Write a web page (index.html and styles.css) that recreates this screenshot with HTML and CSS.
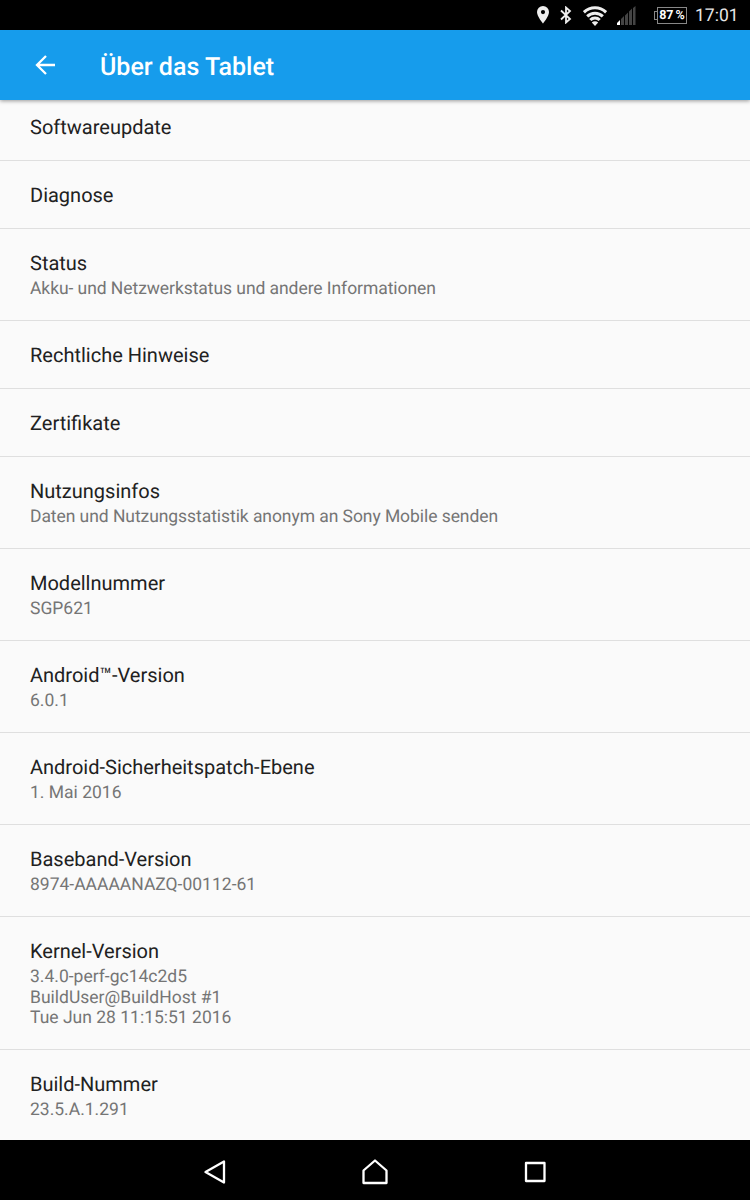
FILE: index.html
```html
<!DOCTYPE html>
<html lang="de">

<head>
    <meta charset="UTF-8">
    <meta name="viewport" content="width=device-width, initial-scale=1.0">
    <title>Über das Tablet</title>
    <link rel="stylesheet" href="styles.css">
</head>

<body>
    <div class="screen">
        <div class="statusbar">
            <svg class="icon-location" width="12" height="18" viewBox="0 0 12 18">
                <path fill="#eee" fill-rule="evenodd" d="M6 0a6 6 0 0 0-6 6c0 4.500 6 11.500 6 11.500S12 10.500 12 6a6 6 0 0 0-6-6zm0 4a2.100 2.100 0 1 1 0 4.200A2.100 2.100 0 0 1 6 4z"/>
            </svg>
            <svg class="icon-bluetooth" width="12" height="18" viewBox="0 0 12 18">
                <path fill="none" stroke="#eee" stroke-width="1.800" d="M1 4.500l9 8.500-4 3.500v-15l4 3.500-9 8.500"/>
            </svg>
            <svg class="icon-wifi" width="24" height="20" viewBox="0 0 24 20">
                <g fill="none" stroke="#eee" stroke-width="3">
                    <path d="M.9 6.300a16 16 0 0 1 22.200 0"/>
                    <path d="M4.200 10.300a11.200 11.200 0 0 1 15.600 0"/>
                    <path d="M7.300 14a6.600 6.600 0 0 1 9.400 0"/>
                </g>
                <path fill="#eee" d="M8.800 16.500a4.600 4.600 0 0 1 6.400 0L12 20z"/>
            </svg>
            <svg class="icon-signal" width="19" height="19" viewBox="0 0 19 19">
                <path fill="#444" d="M4 13l3-3v9H4zM8 9.500l3-3V19H8zM12 5.500l3-3V19h-3zM16 2l2.500-2v19H16z"/>
                <path fill="#fff" d="M0 17l3-3v5H0z"/>
            </svg>
            <div class="battery">87 %</div>
            <div class="clock">17:01</div>
        </div>

        <div class="appbar">
            <svg class="back" width="20" height="20" viewBox="0 0 20 20">
                <path fill="none" stroke="#fff" stroke-width="2.300" d="M20 10H2M11 1l-9 9 9 9"/>
            </svg>
            <h1 class="heading">Über das Tablet</h1>
        </div>

        <div class="content">
            <ul class="list">
                <li class="item">
                    <p class="title">Softwareupdate</p>
                </li>
                <li class="item">
                    <p class="title">Diagnose</p>
                </li>
                <li class="item">
                    <p class="title">Status</p>
                    <p class="summary description">Akku- und Netzwerkstatus und andere Informationen</p>
                </li>
                <li class="item">
                    <p class="title">Rechtliche Hinweise</p>
                </li>
                <li class="item">
                    <p class="title">Zertifikate</p>
                </li>
                <li class="item">
                    <p class="title">Nutzungsinfos</p>
                    <p class="summary description">Daten und Nutzungsstatistik anonym an Sony Mobile senden</p>
                </li>
                <li class="item">
                    <p class="title">Modellnummer</p>
                    <p class="summary">SGP621</p>
                </li>
                <li class="item">
                    <p class="title">Android™-Version</p>
                    <p class="summary">6.0.1</p>
                </li>
                <li class="item">
                    <p class="title">Android-Sicherheitspatch-Ebene</p>
                    <p class="summary">1. Mai 2016</p>
                </li>
                <li class="item">
                    <p class="title">Baseband-Version</p>
                    <p class="summary">8974-AAAAANAZQ-00112-61</p>
                </li>
                <li class="item">
                    <p class="title">Kernel-Version</p>
                    <p class="summary">3.4.0-perf-gc14c2d5<br>BuildUser@BuildHost #1<br>Tue Jun 28 11:15:51 2016</p>
                </li>
                <li class="item">
                    <p class="title">Build-Nummer</p>
                    <p class="summary">23.5.A.1.291</p>
                </li>
            </ul>
        </div>

        <div class="navbar">
            <svg width="24" height="26" viewBox="0 0 24 26">
                <path fill="none" stroke="#fff" stroke-width="2.300" stroke-linejoin="round" d="M21 2.500v21L2.500 13z"/>
            </svg>
            <svg width="26" height="26" viewBox="0 0 26 26">
                <path fill="none" stroke="#fff" stroke-width="2.300" stroke-linejoin="round" d="M13 1.500l11.500 10V24h-23V11.500z"/>
            </svg>
            <svg width="24" height="26" viewBox="0 0 24 26">
                <path fill="none" stroke="#fff" stroke-width="2.300" stroke-linejoin="round" d="M3 4h18.500v18H3z"/>
            </svg>
        </div>
    </div>
</body>

</html>
```
FILE: styles.css
```css
body {
    font-family: Roboto, sans-serif;
    background-color: #000;
    margin: 0;
    text-rendering: geometricPrecision;
}

.screen {
    display: flex;
    flex-direction: column;
    width: 750px;
    height: 1200px;
    overflow: hidden;
}

.statusbar {
    display: flex;
    align-items: center;
    justify-content: flex-end;
    box-sizing: border-box;
    height: 30px;
    padding-right: 11px;
    background-color: #000;
    flex-shrink: 0;
}

.icon-location {
    margin-right: 11px;
}

.icon-bluetooth {
    margin-right: 11px;
}

.icon-wifi {
    margin: 2px 10px 0 0;
}

.icon-signal {
    margin: 1px 21px 0 0;
}

.battery {
    position: relative;
    box-sizing: border-box;
    width: 30px;
    height: 17px;
    margin-right: 8px;
    border: 1px solid #888;
    color: #fff;
    font-size: 12.5px;
    font-weight: 700;
    line-height: 15px;
    text-align: center;
    white-space: nowrap;
    word-spacing: -1px;
}

/* terminal on the left end of the battery */
.battery::before {
    content: "";
    position: absolute;
    left: -4px;
    top: 3px;
    width: 2px;
    height: 7px;
    border: 1px solid #888;
    border-right: none;
}

.clock {
    width: 44px;
    padding-top: 2px;
    color: #e6e6e6;
    font-size: 17.5px;
    line-height: 28px;
}

.appbar {
    position: relative;
    display: flex;
    align-items: center;
    height: 70px;
    padding-left: 35px;
    background-color: #169cec;
    box-shadow: 0 1px 4px rgba(0, 0, 0, 0.4);
    flex-shrink: 0;
}

.heading {
    margin: 4px 0 0 45px;
    color: #fff;
    font-size: 25px;
    font-weight: 500;
}

.content {
    flex: 1;
    overflow: hidden;
    background-color: #fafafa;
}

/* list is scrolled a little under the app bar */
.list {
    margin: -7px 0 0;
    padding: 0;
    list-style: none;
}

.item {
    box-sizing: border-box;
    padding: 22px 30px 21px;
    border-bottom: 1px solid #dfdfdf;
}

.title {
    margin: 0;
    color: #212121;
    font-size: 20px;
    line-height: 24px;
}

.summary {
    margin: 4px 0 -0.5px;
    color: #757575;
    font-size: 17.5px;
    line-height: 20.5px;
}

.description {
    letter-spacing: -0.065px;
}

.navbar {
    display: flex;
    align-items: center;
    justify-content: center;
    gap: 135px;
    height: 60px;
    padding-top: 3px;
    box-sizing: border-box;
    background-color: #000;
    flex-shrink: 0;
}
```
